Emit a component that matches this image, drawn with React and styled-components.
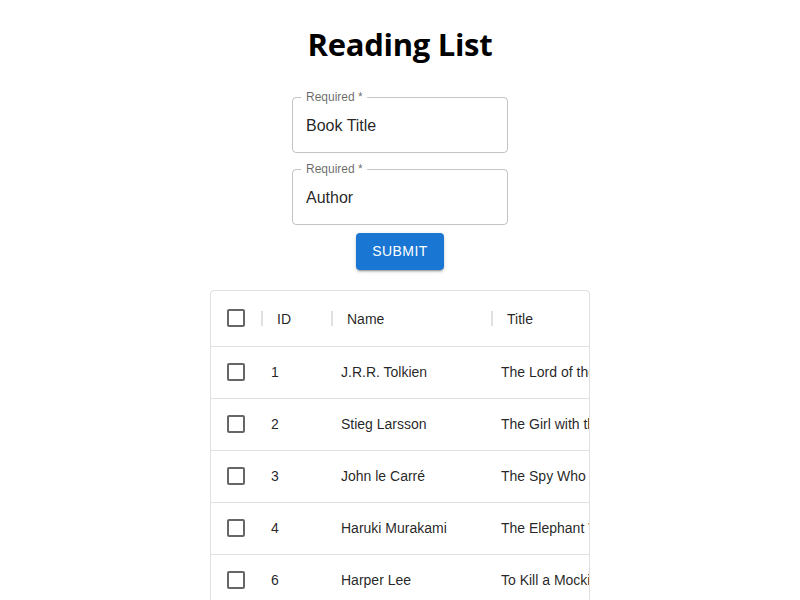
import React from 'react';
import styled, { createGlobalStyle } from 'styled-components';

const GlobalStyle = createGlobalStyle`
  body {
    margin: 0;
    background: #fff;
    font-family: "Liberation Sans", Arial, sans-serif;
  }
`

const Page = styled.div`
  display: flex;
  flex-direction: column;
  align-items: center;
  padding-top: 24px;
`

const Heading = styled.h1`
  margin: 0 0 33px;
  font-family: "Open Sans", "Noto Sans", sans-serif;
  font-size: 31px;
  line-height: 40px;
  font-weight: 700;
  letter-spacing: -0.3px;
  color: #000;
`

const Form = styled.form`
  display: flex;
  flex-direction: column;
  align-items: center;
`

const Field = styled.div`
  position: relative;
  width: 216px;
  margin-bottom: 16px;
  &:last-of-type {
    margin-bottom: 8px;
  }
`

const Input = styled.input`
  display: block;
  box-sizing: border-box;
  width: 100%;
  border: 0;
  outline: 0;
  background: none;
  padding: 17px 14px 16px;
  font-family: "Liberation Sans", Arial, sans-serif;
  font-size: 16px;
  line-height: 23px;
  height: 56px;
  color: rgba(0, 0, 0, 0.87);
  &::placeholder {
    color: rgba(0, 0, 0, 0.87);
    opacity: 1;
  }
`

// outline with notch for the label, laid over the input
const Outline = styled.fieldset`
  position: absolute;
  inset: -5px 0 0 0;
  margin: 0;
  padding: 0 8px;
  border: 1px solid rgba(0, 0, 0, 0.23);
  border-radius: 4px;
  pointer-events: none;
`

const Legend = styled.legend`
  padding: 0 4px 0 5px;
  font-size: 12px;
  line-height: 11px;
  color: rgba(0, 0, 0, 0.6);
`

const Button = styled.button`
  min-width: 64px;
  padding: 6px 16px;
  border: 0;
  border-radius: 4px;
  background: #1976d2;
  color: #fff;
  font-family: "Liberation Sans", Arial, sans-serif;
  font-size: 14px;
  font-weight: 500;
  line-height: 24.5px;
  letter-spacing: 0.02857em;
  text-transform: uppercase;
  box-shadow: 0px 3px 1px -2px rgba(0, 0, 0, 0.2), 0px 2px 2px 0px rgba(0, 0, 0, 0.14), 0px 1px 5px 0px rgba(0, 0, 0, 0.12);
  cursor: pointer;
`

const Grid = styled.div`
  margin-top: 20px;
  width: 380px;
  box-sizing: border-box;
  border: 1px solid #e0e0e0;
  border-radius: 4px;
  overflow: hidden;
  font-size: 14px;
  color: rgba(0, 0, 0, 0.87);
`

const Row = styled.div`
  display: grid;
  grid-template-columns: 50px 70px 160px 240px;
  height: ${p => (p.$header ? 55 : 51)}px;
  border-bottom: 1px solid #e0e0e0;
  width: max-content;
`

const Cell = styled.div`
  position: relative;
  display: flex;
  align-items: center;
  justify-content: ${p => (p.$center ? 'center' : 'flex-start')};
  padding-left: ${p => (p.$center ? 0 : p.$header ? 16 : 10)}px;
  padding-top: ${p => (p.$header ? 2 : 0)}px;
  white-space: nowrap;
  overflow: hidden;
`

const Separator = styled.span`
  position: absolute;
  left: 0;
  top: 20px;
  width: 2px;
  height: 15px;
  background: #e0e0e0;
`

const CheckIcon = styled.svg`
  width: 24px;
  height: 24px;
  fill: rgba(0, 0, 0, 0.6);
`

const Checkbox = () => (
  <CheckIcon viewBox="0 0 24 24">
    <path d="M19 5v14H5V5h14m0-2H5c-1.11 0-2 .9-2 2v14c0 1.1.89 2 2 2h14c1.11 0 2-.9 2-2V5c0-1.1-.89-2-2-2z" />
  </CheckIcon>
)

const books = [
  { id: 1, name: 'J.R.R. Tolkien', title: 'The Lord of the Rings' },
  { id: 2, name: 'Stieg Larsson', title: 'The Girl with the Dragon Tattoo' },
  { id: 3, name: 'John le Carré', title: 'The Spy Who Came in from the Cold' },
  { id: 4, name: 'Haruki Murakami', title: 'The Elephant Vanishes' },
  { id: 6, name: 'Harper Lee', title: 'To Kill a Mockingbird' },
]

const App = () => {
  return <Page>
    <GlobalStyle />
    <Heading>Reading List</Heading>
    <Form onSubmit={e => e.preventDefault()}>
      <Field>
        <Input placeholder="Book Title" />
        <Outline><Legend>Required *</Legend></Outline>
      </Field>
      <Field>
        <Input placeholder="Author" />
        <Outline><Legend>Required *</Legend></Outline>
      </Field>
      <Button type="submit">Submit</Button>
    </Form>
    <Grid>
      <Row $header>
        <Cell $center><Checkbox /></Cell>
        <Cell $header><Separator />ID</Cell>
        <Cell $header><Separator />Name</Cell>
        <Cell $header><Separator />Title</Cell>
      </Row>
      {books.map(b => (
        <Row key={b.id}>
          <Cell $center><Checkbox /></Cell>
          <Cell>{b.id}</Cell>
          <Cell>{b.name}</Cell>
          <Cell>{b.title}</Cell>
        </Row>
      ))}
    </Grid>
  </Page>
}

export default App;
